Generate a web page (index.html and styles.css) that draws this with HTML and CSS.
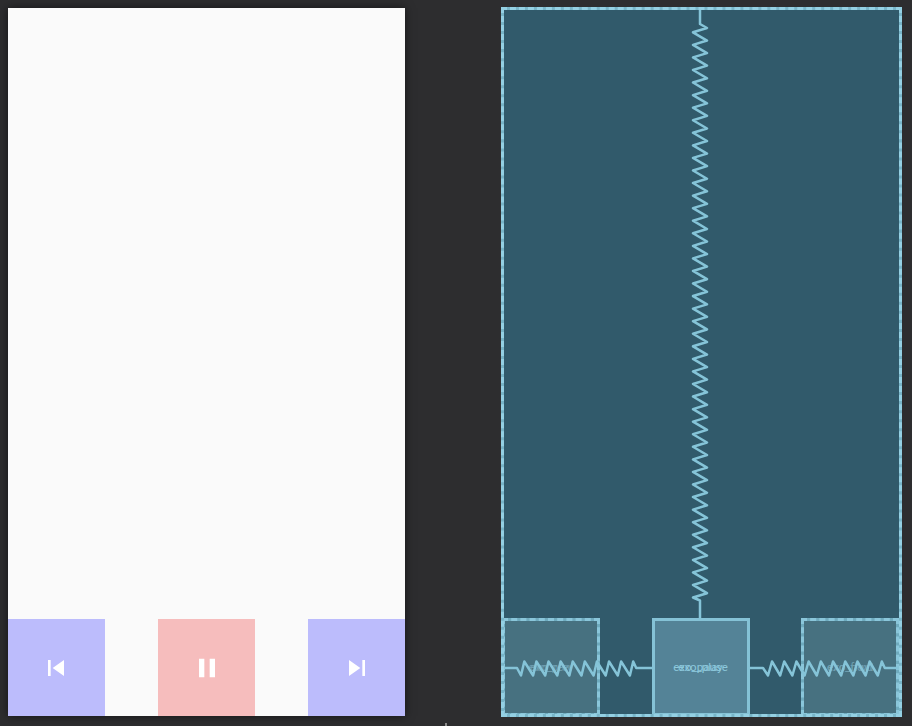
FILE: index.html
```html
<!DOCTYPE html>
<html lang="en">
<head>
    <meta charset="UTF-8">
    <title>Player controls layout</title>
    <link rel="stylesheet" href="styles.css">
</head>
<body>
    <div class="phone">
        <div class="controls">
            <button class="ctrl ctrl-side">
                <svg viewBox="0 0 24 24"><path d="M6 6h2v12H6zm3.5 6l8.5 6V6z"/></svg>
            </button>
            <button class="ctrl ctrl-main">
                <svg viewBox="0 0 24 24"><path d="M6 19h4V5H6v14zm8-14v14h4V5h-4z"/></svg>
            </button>
            <button class="ctrl ctrl-side">
                <svg viewBox="0 0 24 24"><path d="M6 18l8.5-6L6 6v12zM16 6v12h2V6h-2z"/></svg>
            </button>
        </div>
    </div>

    <div class="blueprint">
        <div class="boxes">
            <div class="box">
                <span>exo_prev</span>
                <span>exo_rew</span>
            </div>
            <div class="box box-main">
                <span>exo_pause</span>
                <span>exo_play</span>
            </div>
            <div class="box">
                <span>exo_next</span>
                <span>exo_ffwd</span>
            </div>
        </div>
        <!-- constraint springs, coordinates are page pixels -->
        <svg class="springs" viewBox="501 7 400 710">
            <path d="M700 8V24l7 4 -14 4.3
                14 8.26 -14 4.3 14 8.26 -14 4.3 14 8.26 -14 4.3 14 8.26 -14 4.3 14 8.26 -14 4.3
                14 8.26 -14 4.3 14 8.26 -14 4.3 14 8.26 -14 4.3 14 8.26 -14 4.3 14 8.26 -14 4.3
                14 8.26 -14 4.3 14 8.26 -14 4.3 14 8.26 -14 4.3 14 8.26 -14 4.3 14 8.26 -14 4.3
                14 8.26 -14 4.3 14 8.26 -14 4.3 14 8.26 -14 4.3 14 8.26 -14 4.3 14 8.26 -14 4.3
                14 8.26 -14 4.3 14 8.26 -14 4.3 14 8.26 -14 4.3 14 8.26 -14 4.3 14 8.26 -14 4.3
                14 8.26 -14 4.3 14 8.26 -14 4.3 14 8.26 -14 4.3 14 8.26 -14 4.3 14 8.26 -14 4.3
                14 8.26 -14 4.3 14 8.26 -14 4.3 14 8.26 -14 4.3 14 8.26 -14 4.3 14 8.26 -14 4.3
                14 8.26 -14 4.3 14 8.26 -14 4.3 14 8.26 -14 4.3 14 8.26 -14 4.3 14 8.26 -14 4.3
                14 8.26 -14 4.3 14 8.26 -14 4.3 14 8.26 -14 4.3 14 8.26 -14 4.3 14 8.26 -14 4.3
                L700 600.5V618"/>
            <path d="M502 668H517l4 7.5 3.3-14 8.8 14 3.3-14 8.8 14 3.3-14 8.8 14 3.3-14 8.8 14 3.3-14 8.8 14 3.3-14 8.8 14 3.3-14 8.8 14 3.3-14 8.8 14 3.3-14 8.8 14 3.3-14 3 6.5H652"/>
            <path d="M749 668H763l5 7.5 4-14 8.2 14 4-14 8.2 14 4-14 8.2 14 4-14 8.2 14 4-14 8.2 14 4-14 8.2 14 4-14 8.2 14 4-14 8.2 14 4-14 8.2 14 4-14 3 6.5H900"/>
        </svg>
    </div>

    <div class="cursor-mark"></div>
</body>
</html>
```

FILE: styles.css
```css
html, body {
    height: 100%;
}
body {
    margin: 0;
    padding: 7px 0 0 8px;
    box-sizing: border-box;
    background: #2d2d2f;
    font-family: Roboto, "Liberation Sans", sans-serif;
    display: flex;
    align-items: flex-start;
    overflow: hidden;
}
.phone {
    width: 397px;
    height: 708px;
    margin-top: 1px;
    background: #fafafa;
    box-shadow: 0 0 9px rgba(0, 0, 0, 0.55);
    display: flex;
    flex-direction: column;
    justify-content: flex-end;
}
.controls {
    display: flex;
    justify-content: space-between;
}
.ctrl {
    width: 96.6px;
    height: 97px;
    border: 0;
    padding: 0;
    display: flex;
    align-items: center;
    justify-content: center;
}
.ctrl svg {
    width: 32px;
    height: 32px;
    fill: #fff;
}
.ctrl-side {
    background: #bcbcfc;
}
.ctrl-main {
    background: #f6bdbd;
}
.blueprint {
    position: relative;
    width: 401px;
    height: 710px;
    margin-left: 96px;
    box-sizing: border-box;
    padding: 0 3px 1px 1px;
    background: #315a6b;
    display: flex;
    flex-direction: column;
    justify-content: flex-end;
}
.blueprint::after {
    content: "";
    position: absolute;
    inset: 0;
    border: 3px dashed #94d0e3;
    background: linear-gradient(#78b5c8, #78b5c8) border-box;
    -webkit-mask: linear-gradient(#000, #000) border-box, linear-gradient(#000, #000) padding-box;
    -webkit-mask-composite: xor;
    mask-composite: exclude;
}
.boxes {
    display: flex;
    justify-content: space-between;
}
.box {
    width: 98px;
    height: 98px;
    box-sizing: border-box;
    border: 3px dashed #8ac6da;
    background: linear-gradient(#477180, #477180) padding-box, linear-gradient(#6fabbe, #6fabbe) border-box;
    color: #6f9fb0;
    font-size: 11.5px;
    display: grid;
    place-items: center;
}
.box span {
    grid-area: 1 / 1;
}
.box-main {
    border: 3px solid #85c2d6;
    background: #548397;
    color: #8cc8dc;
}
.springs {
    position: absolute;
    left: 0;
    top: 0;
    width: 400px;
    height: 710px;
    fill: none;
    stroke: #85c4d8;
    stroke-width: 2.5;
    stroke-linejoin: round;
}
.cursor-mark {
    position: absolute;
    left: 445px;
    top: 723px;
    width: 2px;
    height: 3px;
    background: #8a8a8a;
}
```
